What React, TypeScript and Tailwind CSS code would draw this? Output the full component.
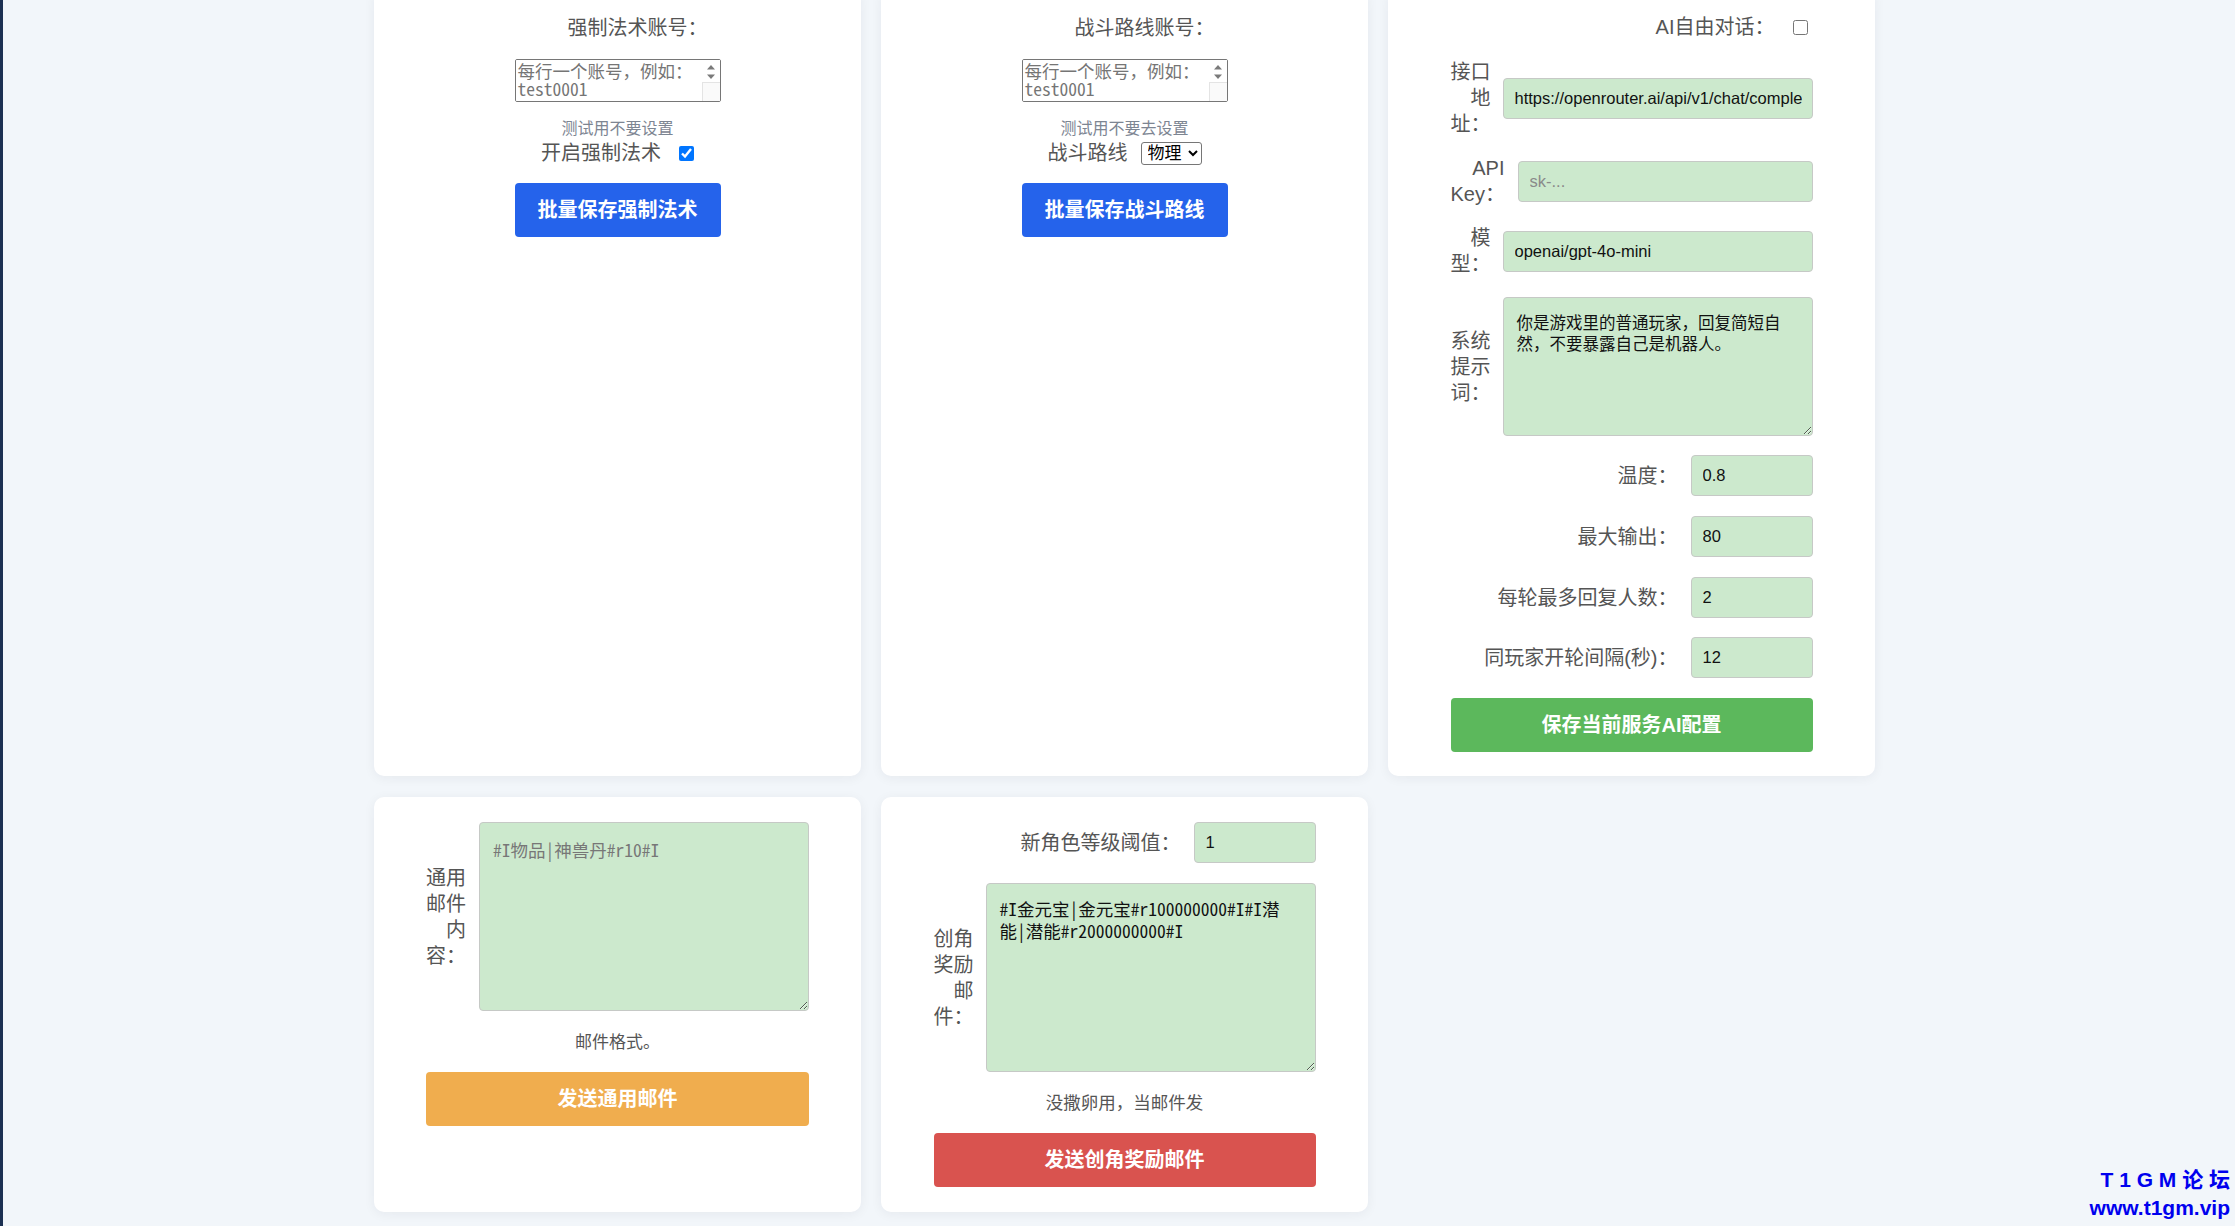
import React from "react";

const SANS = "font-['Liberation_Sans','Noto_Sans_CJK_SC',sans-serif]";
const MONO = "font-['Noto_Sans_Mono_CJK_SC','Liberation_Mono','Noto_Sans_CJK_SC',monospace]";

const card = "bg-white rounded-[10px] shadow-[0_2px_12px_rgba(30,41,59,0.06)]";
const field =
  "bg-[#cce9cd] border border-[#c6c9c6] rounded-[4px] text-[16.5px] text-[#111] outline-none placeholder:text-[#8a8a8a]";
const label = "text-[20px] leading-[26px] text-[#555]";
const bigBtn = "h-[54px] rounded-[4px] text-white text-[20px] font-bold";

function SmallAccounts({ placeholder }: { placeholder: string }) {
  return (
    <div className="relative mt-[18px] w-[206px] h-[43px]">
      <textarea
        rows={2}
        placeholder={placeholder}
        className={`${MONO} block w-[206px] h-[43px] p-[2px] pr-[20px] text-[17.5px] leading-[18px] border border-[#767676] rounded-[2px] bg-white placeholder:text-[#757575] outline-none`}
      />
      {/* fake native scrollbar with arrows */}
      <div className="absolute top-[1px] right-[1px] w-[18px] h-[41px] bg-white flex flex-col items-center pointer-events-none">
        <svg width="10" height="16" viewBox="0 0 10 16" className="mt-[4px]">
          <path d="M1 5.5 L5 1 L9 5.5 Z" fill="#7a7a7a" />
          <path d="M1 10.5 L5 15 L9 10.5 Z" fill="#7a7a7a" />
        </svg>
        <div className="mt-auto w-[18px] h-[19px] border-t border-l border-[#e4e4e4] bg-[#fafafa]" />
      </div>
    </div>
  );
}

function InlineField({ text, value }: { text: string; value: string }) {
  return (
    <div className="flex items-center justify-end">
      <span className={`${label} whitespace-nowrap`}>{text}</span>
      <input defaultValue={value} className={`${field} ml-[13px] w-[122px] h-[41px] pl-[11px]`} />
    </div>
  );
}

export default function App() {
  return (
    <div className={`${SANS} flex h-[1226px] overflow-hidden bg-[#f2f6fa] relative`}>
      <div className="w-[3px] shrink-0 bg-[#1c3052]" />
      <div className="flex-1 pl-[371px]">
        <div className="grid grid-cols-[487px_487px_487px] gap-x-[20px] gap-y-[21px] -mt-[10px]">
          {/* 强制法术 */}
          <div className={`${card} flex flex-col items-center pt-[25px]`}>
            <p className={`${label} pl-[40px]`}>强制法术账号：</p>
            <SmallAccounts placeholder={"每行一个账号，例如：\ntest0001\ntest0002"} />
            <p className="mt-[17px] text-[16px] leading-[20px] text-[#7d8592]">测试用不要设置</p>
            <div className="mt-[1px] flex items-center">
              <span className={label}>开启强制法术</span>
              <input type="checkbox" defaultChecked className="ml-[18px] w-[15px] h-[15px] accent-[#0075ff]" />
            </div>
            <button className={`${bigBtn} mt-[17px] w-[206px] bg-[#2563eb]`}>批量保存强制法术</button>
          </div>

          {/* 战斗路线 */}
          <div className={`${card} flex flex-col items-center pt-[25px]`}>
            <p className={`${label} pl-[40px]`}>战斗路线账号：</p>
            <SmallAccounts placeholder={"每行一个账号，例如：\ntest0001\ntest0002"} />
            <p className="mt-[17px] text-[16px] leading-[20px] text-[#7d8592]">测试用不要去设置</p>
            <div className="mt-[1px] flex items-center">
              <span className={label}>战斗路线</span>
              <select
                defaultValue="物理"
                className="ml-[13px] w-[61px] h-[23px] pl-[2px] text-[17px] leading-none text-black bg-white border border-[#767676] rounded-[3px]"
              >
                <option>物理</option>
                <option>法术</option>
              </select>
            </div>
            <button className={`${bigBtn} mt-[17px] w-[206px] bg-[#2563eb]`}>批量保存战斗路线</button>
          </div>

          {/* AI 配置 */}
          <div className={`${card} pt-[24px] pb-[24px]`}>
            <div className="w-[362px] mx-auto flex flex-col">
              <div className="h-[26px] flex items-center justify-end">
                <span className={label}>AI自由对话：</span>
                <input type="checkbox" className="ml-[18px] mr-[5px] w-[15px] h-[15px]" />
              </div>
              <div className="mt-[19px] flex items-center">
                <span className={`${label} w-[40px] text-right`}>接口地址：</span>
                <input
                  defaultValue="https://openrouter.ai/api/v1/chat/completions"
                  className={`${field} ml-[12px] w-[310px] h-[41px] pl-[11px] pr-[10px]`}
                />
              </div>
              <div className="mt-[18px] flex items-center">
                <span className={`${label} w-[54px] text-right`}>
                  API
                  <br />
                  Key：
                </span>
                <input placeholder="sk-..." className={`${field} ml-[13px] w-[295px] h-[41px] pl-[11px]`} />
              </div>
              <div className="mt-[18px] flex items-center">
                <span className={`${label} w-[40px] text-right`}>模型：</span>
                <input defaultValue="openai/gpt-4o-mini" className={`${field} ml-[12px] w-[310px] h-[41px] pl-[11px]`} />
              </div>
              <div className="mt-[20px] flex items-center">
                <span className={`${label} w-[40px] text-right`}>系统提示词：</span>
                <textarea
                  defaultValue="你是游戏里的普通玩家，回复简短自然，不要暴露自己是机器人。"
                  className={`${field} ml-[12px] w-[310px] h-[139px] pl-[13px] pr-[14px] pt-[15px] leading-[21px]`}
                />
              </div>
              <div className="mt-[19px]">
                <InlineField text="温度：" value="0.8" />
              </div>
              <div className="mt-[20px]">
                <InlineField text="最大输出：" value="80" />
              </div>
              <div className="mt-[20px]">
                <InlineField text="每轮最多回复人数：" value="2" />
              </div>
              <div className="mt-[19px]">
                <InlineField text="同玩家开轮间隔(秒)：" value="12" />
              </div>
              <button className={`${bigBtn} mt-[20px] w-full bg-[#5cb85c]`}>保存当前服务AI配置</button>
            </div>
          </div>

          {/* 通用邮件 */}
          <div className={`${card} h-[415px] pt-[25px]`}>
            <div className="w-[383px] mx-auto flex flex-col items-center">
              <div className="flex items-center self-stretch">
                <span className={`${label} w-[40px] text-right`}>通用邮件内容：</span>
                <textarea
                  placeholder="#I物品|神兽丹#r10#I"
                  className={`${field} ${MONO} ml-[13px] w-[330px] h-[189px] pl-[13px] pr-[14px] pt-[16px] text-[17.5px] leading-[22px] placeholder:text-[#777]`}
                />
              </div>
              <p className="mt-[19px] text-[17px] leading-[26px] text-[#555]">邮件格式。</p>
              <button className={`${bigBtn} mt-[16px] w-full bg-[#f0ad4e]`}>发送通用邮件</button>
            </div>
          </div>

          {/* 创角奖励邮件 */}
          <div className={`${card} h-[415px] pt-[25px]`}>
            <div className="w-[382px] mx-auto flex flex-col items-center">
              <div className="self-stretch">
                <InlineField text="新角色等级阈值：" value="1" />
              </div>
              <div className="mt-[20px] flex items-center self-stretch">
                <span className={`${label} w-[40px] text-right`}>创角奖励邮件：</span>
                <textarea
                  defaultValue="#I金元宝|金元宝#r100000000#I#I潜能|潜能#r2000000000#I"
                  className={`${field} ${MONO} ml-[12px] w-[330px] h-[189px] pl-[13px] pr-[20px] pt-[14px] text-[17.5px] leading-[22px]`}
                />
              </div>
              <p className="mt-[18px] text-[17.5px] leading-[26px] text-[#555]">没撒卵用，当邮件发</p>
              <button className={`${bigBtn} mt-[17px] w-full bg-[#d9534f]`}>发送创角奖励邮件</button>
            </div>
          </div>
        </div>
      </div>

      <div className="absolute right-[5px] bottom-[4px] text-right font-bold text-[21px] leading-[28px] text-[#0000ee]">
        <div>T 1 G M 论 坛</div>
        <div>www.t1gm.vip</div>
      </div>
    </div>
  );
}
